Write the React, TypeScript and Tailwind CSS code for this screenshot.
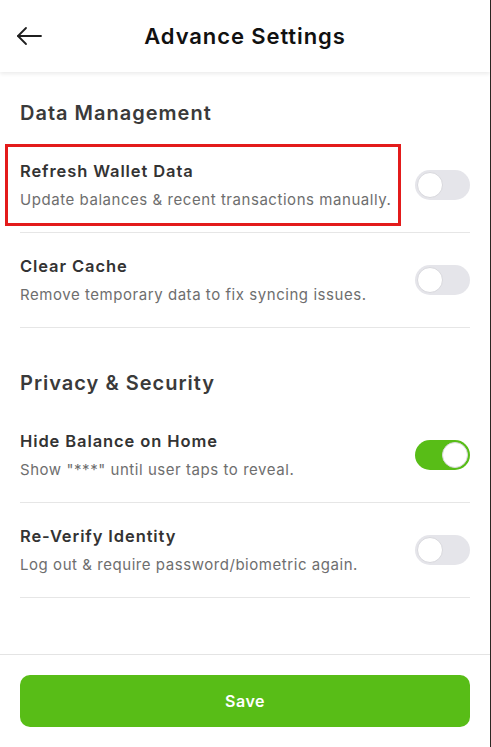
import { useState } from 'react';

type Item = { title: string; desc: string; on: boolean; marked?: boolean };

const sections: { heading: string; items: Item[] }[] = [
  {
    heading: 'Data Management',
    items: [
      { title: 'Refresh Wallet Data', desc: 'Update balances & recent transactions manually.', on: false, marked: true },
      { title: 'Clear Cache', desc: 'Remove temporary data to fix syncing issues.', on: false },
    ],
  },
  {
    heading: 'Privacy & Security',
    items: [
      { title: 'Hide Balance on Home', desc: 'Show "***" until user taps to reveal.', on: true },
      { title: 'Re-Verify Identity', desc: 'Log out & require password/biometric again.', on: false },
    ],
  },
];

function Toggle({ on, onClick }: { on: boolean; onClick: () => void }) {
  return (
    <button
      onClick={onClick}
      className={`flex h-[30px] w-[55px] shrink-0 items-center rounded-full px-[2px] ${
        on ? 'justify-end bg-[#58bd17]' : 'justify-start bg-[#e5e5ea]'
      }`}
    >
      <span className="h-[26px] w-[26px] rounded-full border border-[#d8d8dd] bg-white" />
    </button>
  );
}

function Row({ item }: { item: Item }) {
  const [on, setOn] = useState(item.on);
  return (
    <div className="flex items-center justify-between border-b border-[#e6e6e6] pt-[21px] pb-[22px]">
      <div className="relative">
        {/* highlight marker drawn over the first row */}
        {item.marked && (
          <span className="pointer-events-none absolute -top-[15px] -bottom-[16px] -left-[15px] -right-[10px] border-[3px] border-[#e31b1b]" />
        )}
        <div className="text-[16.5px] leading-[24px] font-semibold tracking-[0.9px] text-[#333333]">{item.title}</div>
        <div className="mt-[7px] text-[15px] leading-[20px] tracking-[0.55px] text-[#6e6e6e]">{item.desc}</div>
      </div>
      <Toggle on={on} onClick={() => setOn(!on)} />
    </div>
  );
}

export default function App() {
  return (
    <div className="flex min-h-screen bg-[#2b2722] font-['Inter',sans-serif]">
      <div className="flex h-[747px] w-[490px] flex-col bg-white">
        <header className="relative z-10 grid h-[72px] shrink-0 grid-cols-[60px_1fr_60px] items-center bg-white shadow-[0_2px_4px_rgba(0,0,0,0.08)]">
          <button className="flex h-full items-center pl-[16px]">
            <svg width="26" height="20" viewBox="0 0 26 20" fill="none" stroke="#1f1f1f" strokeWidth="1.8" strokeLinecap="round" strokeLinejoin="round">
              <path d="M25 10H2" />
              <path d="M10 2 2 10l8 8" />
            </svg>
          </button>
          <h1 className="text-center text-[22px] font-semibold tracking-[0.9px] text-[#111111]">Advance Settings</h1>
          <div />
        </header>

        <main className="flex-1 px-5 pt-[27px]">
          {sections.map((s, i) => (
            <section key={s.heading} className={i > 0 ? 'mt-[41px]' : ''}>
              <h2 className="mb-[11px] text-[20px] leading-[28px] font-semibold tracking-[1px] text-[#3a3a3a]">{s.heading}</h2>
              {s.items.map((it) => (
                <Row key={it.title} item={it} />
              ))}
            </section>
          ))}
        </main>

        <footer className="shrink-0 border-t border-[#e4e4e4] px-5 pt-5 pb-5">
          <button className="h-[52px] w-full rounded-[10px] bg-[#58bd17] text-[16px] font-semibold tracking-[0.5px] text-white">Save</button>
        </footer>
      </div>
    </div>
  );
}
